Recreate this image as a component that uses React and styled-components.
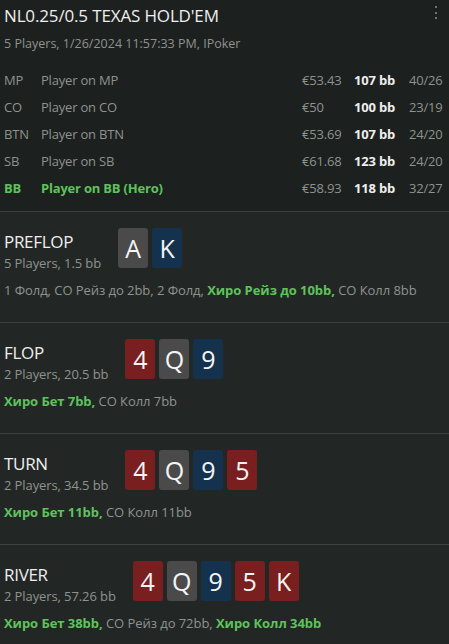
import React from 'react';
import styled, { createGlobalStyle } from 'styled-components';

const GlobalStyle = createGlobalStyle`
  html, body {
    margin: 0;
    padding: 0;
    background: #222725;
  }
  body {
    font-family: "Open Sans", "Noto Sans", sans-serif;
    -webkit-font-smoothing: antialiased;
  }
`;

const grey = '#8e9390';
const white = '#eeeeee';
const green = '#5fc25c';

const Page = styled.div`
  width: 449px;
  min-height: 644px;
  background: #222725;
`;

const Header = styled.header`
  background: #1c201e;
  padding: 4px 5px 10px 4px;
`;

const TitleRow = styled.div`
  display: flex;
  align-items: flex-start;
  justify-content: space-between;
`;

const Title = styled.h1`
  margin: 0;
  font-size: 17px;
  font-weight: 400;
  line-height: 24px;
  color: ${white};
  letter-spacing: -0.15px;
`;

const MenuButton = styled.button`
  border: 0;
  background: none;
  padding: 0;
  margin: 1px 5px 0 0;
  width: 6px;
  height: 18px;
  display: flex;
  justify-content: center;
  color: #6f7572;
  cursor: pointer;
`;

const Subtitle = styled.div`
  margin-top: 7px;
  font-size: 12.5px;
  line-height: 18px;
  color: ${grey};
  letter-spacing: 0;
`;

const PlayerTable = styled.div`
  margin-top: 13px;
  display: grid;
  grid-template-columns: 37px 1fr 52px 55px 35px;
  grid-auto-rows: 27px;
  align-items: center;
  font-size: 13px;
  letter-spacing: -0.2px;
`;

const Cell = styled.div`
  color: ${p => (p.$hero ? green : p.$strong ? white : grey)};
  font-weight: ${p => (p.$hero || p.$strong ? 700 : 400)};
  white-space: nowrap;
`;

const Street = styled.section`
  border-top: 1px solid #3b413e;
  padding: 16px 4px 23px 4px;
`;

const StreetTop = styled.div`
  display: flex;
  align-items: flex-start;
  gap: 17px;
`;

const StreetInfo = styled.div`
  margin-top: 2px;
`;

const StreetName = styled.div`
  font-size: 17px;
  line-height: 24px;
  color: ${white};
  letter-spacing: -0.3px;
`;

const StreetMeta = styled.div`
  font-size: 13px;
  line-height: 18px;
  color: ${grey};
  letter-spacing: -0.1px;
`;

const Cards = styled.div`
  display: flex;
  gap: 4px;
`;

const cardColors = {
  red: '#7a1f1f',
  grey: '#4a4a4a',
  blue: '#14324e',
};

const Card = styled.div`
  width: 30px;
  height: 40px;
  border-radius: 3px;
  background: ${p => cardColors[p.$suit]};
  color: #f4f4f4;
  font-size: 25px;
  line-height: 40px;
  text-align: center;
`;

const Actions = styled.div`
  margin-top: 9px;
  font-size: 13px;
  line-height: 18px;
  color: ${grey};
  letter-spacing: -0.05px;
  white-space: nowrap;
`;

const Hero = styled.span`
  color: ${green};
  font-weight: 700;
`;

const Dots = () => (
  <svg width="4" height="16" viewBox="0 0 4 16">
    <rect x="1" y="1" width="2" height="2" fill="currentColor" />
    <rect x="1" y="7" width="2" height="2" fill="currentColor" />
    <rect x="1" y="12" width="2" height="2" fill="currentColor" />
  </svg>
);

const players = [
  { pos: 'MP', name: 'Player on MP', stack: '€53.43', bb: '107 bb', stats: '40/26' },
  { pos: 'CO', name: 'Player on CO', stack: '€50', bb: '100 bb', stats: '23/19' },
  { pos: 'BTN', name: 'Player on BTN', stack: '€53.69', bb: '107 bb', stats: '24/20' },
  { pos: 'SB', name: 'Player on SB', stack: '€61.68', bb: '123 bb', stats: '24/20' },
  { pos: 'BB', name: 'Player on BB (Hero)', stack: '€58.93', bb: '118 bb', stats: '32/27', hero: true },
];

const streets = [
  {
    name: 'PREFLOP',
    meta: '5 Players, 1.5 bb',
    cards: [['A', 'grey'], ['K', 'blue']],
    actions: [
      ['1 Фолд, CO Рейз до 2bb, 2 Фолд, '],
      ['Хиро Рейз до 10bb,', true],
      [' CO Колл 8bb'],
    ],
  },
  {
    name: 'FLOP',
    meta: '2 Players, 20.5 bb',
    cards: [['4', 'red'], ['Q', 'grey'], ['9', 'blue']],
    actions: [['Хиро Бет 7bb,', true], [' CO Колл 7bb']],
  },
  {
    name: 'TURN',
    meta: '2 Players, 34.5 bb',
    cards: [['4', 'red'], ['Q', 'grey'], ['9', 'blue'], ['5', 'red']],
    actions: [['Хиро Бет 11bb,', true], [' CO Колл 11bb']],
  },
  {
    name: 'RIVER',
    meta: '2 Players, 57.26 bb',
    cards: [['4', 'red'], ['Q', 'grey'], ['9', 'blue'], ['5', 'red'], ['K', 'red']],
    actions: [
      ['Хиро Бет 38bb,', true],
      [' CO Рейз до 72bb, '],
      ['Хиро Колл 34bb', true],
    ],
  },
];

export default function App() {
  return (
    <Page>
      <GlobalStyle />
      <Header>
        <TitleRow>
          <Title>NL0.25/0.5 TEXAS HOLD'EM</Title>
          <MenuButton aria-label="menu">
            <Dots />
          </MenuButton>
        </TitleRow>
        <Subtitle>5 Players, 1/26/2024 11:57:33 PM, IPoker</Subtitle>
        <PlayerTable>
          {players.map(p => (
            <React.Fragment key={p.pos}>
              <Cell $hero={p.hero}>{p.pos}</Cell>
              <Cell $hero={p.hero}>{p.name}</Cell>
              <Cell>{p.stack}</Cell>
              <Cell $strong>{p.bb}</Cell>
              <Cell>{p.stats}</Cell>
            </React.Fragment>
          ))}
        </PlayerTable>
      </Header>

      {streets.map(s => (
        <Street key={s.name}>
          <StreetTop>
            <StreetInfo>
              <StreetName>{s.name}</StreetName>
              <StreetMeta>{s.meta}</StreetMeta>
            </StreetInfo>
            <Cards>
              {s.cards.map(([rank, suit], i) => (
                <Card key={i} $suit={suit}>
                  {rank}
                </Card>
              ))}
            </Cards>
          </StreetTop>
          <Actions>
            {s.actions.map(([text, hero], i) =>
              hero ? <Hero key={i}>{text}</Hero> : <span key={i}>{text}</span>
            )}
          </Actions>
        </Street>
      ))}
    </Page>
  );
}
